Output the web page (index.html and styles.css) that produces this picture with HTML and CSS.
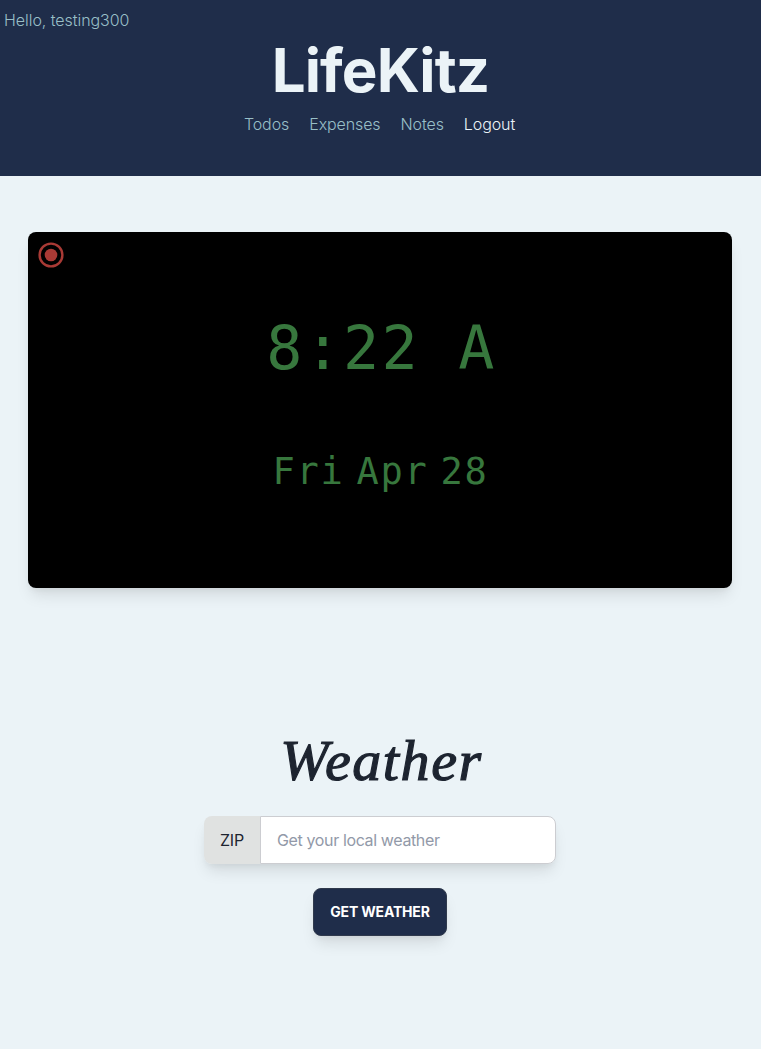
FILE: index.html
```html
<!DOCTYPE html>
<html lang="en">
<head>
<meta charset="utf-8">
<title>LifeKitz</title>
<link rel="stylesheet" href="styles.css">
</head>
<body>
<header class="header">
  <p class="greeting">Hello, testing300</p>
  <h1 class="brand">LifeKitz</h1>
  <nav class="nav">
    <a>Todos</a><a>Expenses</a><a>Notes</a><a class="logout">Logout</a>
  </nav>
</header>
<main class="main">
  <section class="clock">
    <svg class="record" viewBox="0 0 26 26"><circle cx="13" cy="13" r="11.4" fill="none" stroke="currentColor" stroke-width="2.4"/><circle cx="13" cy="13" r="6.3" fill="currentColor"/></svg>
    <div class="time">8:22 A</div>
    <div class="date">Fri Apr 28</div>
  </section>
  <section class="weather">
    <h2 class="title">Weather</h2>
    <label class="field">
      <span class="zip">ZIP</span>
      <input class="input" type="text" placeholder="Get your local weather">
    </label>
    <button class="button">GET WEATHER</button>
  </section>
</main>
</body>
</html>
```
FILE: styles.css
```css
* { box-sizing: border-box; }
body { margin: 0; min-height: 1049px; background: #ebf3f7; color: #1d2430; font: 16px/24px Inter, sans-serif; }
.header { height: 176px; padding: 8px 4px 0; background: #1f2d4a; color: #98bfc7; font-weight: 300; }
.greeting { margin: 0; letter-spacing: -.05px; }
.brand { margin: 8px 0 12px; text-align: center; font-size: 60px; line-height: 60px; font-weight: 700; letter-spacing: -.9px; color: #ebf3f7; }
.nav { display: flex; justify-content: center; gap: 20px; padding-right: 2px; letter-spacing: -.1px; }
.logout { color: #ebf3f7; }
.main { padding: 56px 29px 0 28px; }
.clock { position: relative; display: flex; flex-direction: column; align-items: center; height: 356px; padding-top: 83px; border-radius: 8px; background: #000; color: #37773d; font-family: "DejaVu Sans Mono", monospace; box-shadow: 0 10px 15px -3px rgba(0,0,0,.1), 0 4px 6px -2px rgba(0,0,0,.05); }
.record { position: absolute; left: 10px; top: 10px; width: 26px; height: 26px; color: #a93a35; }
.time { padding-left: 3px; font-size: 60px; line-height: 66px; letter-spacing: 2.3px; white-space: pre; }
.date { margin-top: 71px; padding-left: 1px; font-size: 37px; line-height: 40px; letter-spacing: 1.7px; word-spacing: -12px; }
.weather { display: flex; flex-direction: column; align-items: center; padding-top: 140px; }
.title { margin: 0 0 20px; padding-left: 3px; font: italic 400 58px/66px "Homemade Apple", "Liberation Serif", cursive; padding-bottom: 2px; letter-spacing: 1.6px; -webkit-text-stroke: 1.2px currentColor; }
.field { display: flex; width: 352px; height: 48px; border-radius: 8px; box-shadow: 0 10px 15px -3px rgba(0,0,0,.1), 0 4px 6px -2px rgba(0,0,0,.05); }
.zip { width: 56px; padding: 12px 16px; border-radius: 8px 0 0 8px; background: #e0e2e1; letter-spacing: -.2px; }
.input { flex: 1; min-width: 0; padding: 0 16px; border: 1px solid #cccdd1; border-radius: 0 8px 8px 0; background: #fff; font: 16px/24px Inter, sans-serif; letter-spacing: -.37px; color: #1d2430; }
.input::placeholder { color: #9299a8; opacity: 1; }
.button { width: 134px; height: 48px; margin-top: 24px; padding: 0; border: 1px solid #303a4d; border-radius: 8px; background: #1f2d4a; color: #fff; font: 700 14px/14px Inter, sans-serif; letter-spacing: -.18px; white-space: nowrap; box-shadow: 0 10px 15px -3px rgba(0,0,0,.1), 0 4px 6px -2px rgba(0,0,0,.05); }
```
